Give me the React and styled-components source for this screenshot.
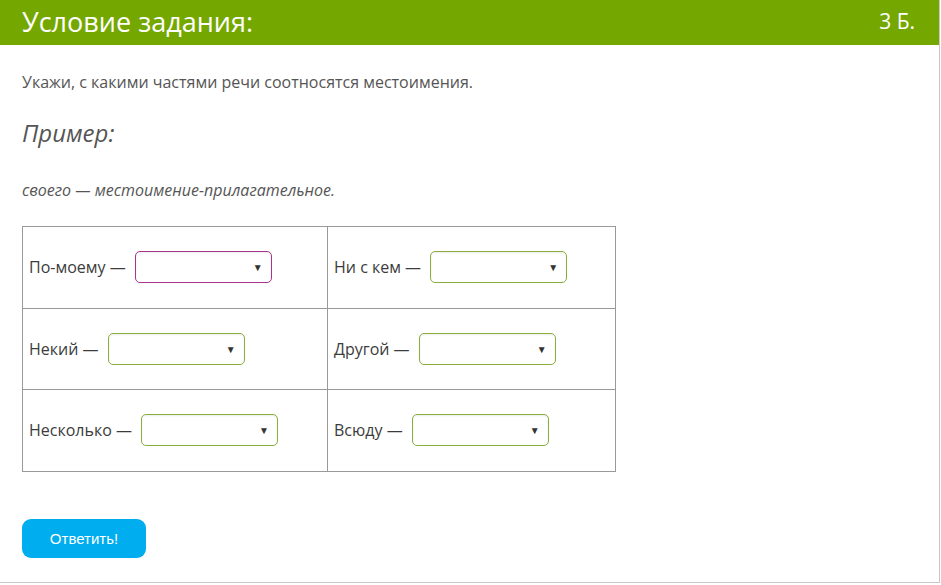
import React from "react";
import styled, { createGlobalStyle } from "styled-components";

const GlobalStyle = createGlobalStyle`
  html, body {
    margin: 0;
    padding: 0;
    background: #fff;
  }
  body {
    font-family: "Open Sans", "Noto Sans", sans-serif;
    color: #444;
  }
`;

const Card = styled.div`
  width: 939px;
  height: 582px;
  border-right: 1px solid #c8c8c8;
  border-bottom: 1px solid #c8c8c8;
  box-sizing: content-box;
  display: flex;
  flex-direction: column;
`;

const Header = styled.div`
  height: 45px;
  background: #74a800;
  color: #fff;
  display: flex;
  align-items: center;
  justify-content: space-between;
  padding: 0 24px 0 22px;
`;

const HeaderTitle = styled.h2`
  margin: 0;
  font-size: 27px;
  font-weight: 400;
  line-height: 1;
  padding-bottom: 2px;
`;

const Points = styled.span`
  font-size: 21px;
  line-height: 1;
  padding-bottom: 2px;
`;

const Body = styled.div`
  padding: 0 22px;
  display: flex;
  flex-direction: column;
`;

const Lead = styled.p`
  margin: 26px 0 0;
  font-size: 16px;
  line-height: 22px;
  color: #555;
`;

const ExampleTitle = styled.h3`
  margin: 25px 0 0;
  font-size: 24px;
  font-style: italic;
  font-weight: 400;
  line-height: 30px;
  color: #555;
`;

const ExampleText = styled.p`
  margin: 32px 0 0;
  font-size: 16px;
  font-style: italic;
  line-height: 20px;
  color: #555;
`;

const Table = styled.table`
  margin-top: 26px;
  width: 594px;
  border-collapse: collapse;
  border: 1px solid #999;
  table-layout: fixed;
`;

const Cell = styled.td`
  border: 1px solid #999;
  height: 81.5px;
  padding: 0 6px;
  width: ${(p) => (p.$first ? "305px" : "auto")};
  box-sizing: border-box;
`;

const Field = styled.div`
  display: flex;
  align-items: center;
  gap: 9px;
  font-size: 16px;
  color: #3c3c3c;
`;

const SelectBox = styled.div`
  width: 137px;
  height: 32px;
  box-sizing: border-box;
  border: 1px solid ${(p) => (p.$active ? "#a8358c" : "#8aae3c")};
  border-radius: 5px;
  display: flex;
  align-items: center;
  justify-content: flex-end;
  padding-right: 8px;
  background: #fff;
  box-shadow: inset 0 1px 2px rgba(0, 0, 0, 0.08);
`;

const Arrow = styled.span`
  font-size: 10px;
  color: #333;
  line-height: 1;
`;

const Submit = styled.button`
  margin-top: 47px;
  width: 124px;
  height: 39px;
  border: none;
  border-radius: 9px;
  background: #00adef;
  color: #fff;
  font-family: "Liberation Sans", Arial, sans-serif;
  font-size: 15px;
  cursor: pointer;
  align-self: flex-start;
`;

const rows = [
  ["По-моему", "Ни с кем"],
  ["Некий", "Другой"],
  ["Несколько", "Всюду"],
];

const Select = ({ active }) => (
  <SelectBox $active={active}>
    <Arrow>▼</Arrow>
  </SelectBox>
);

const App = () => (
  <>
    <GlobalStyle />
    <Card>
      <Header>
        <HeaderTitle>Условие задания:</HeaderTitle>
        <Points>3 Б.</Points>
      </Header>
      <Body>
        <Lead>Укажи, с какими частями речи соотносятся местоимения.</Lead>
        <ExampleTitle>Пример:</ExampleTitle>
        <ExampleText>своего — местоимение-прилагательное.</ExampleText>
        <Table>
          <tbody>
            {rows.map((row, i) => (
              <tr key={i}>
                {row.map((word, j) => (
                  <Cell key={word} $first={j === 0}>
                    <Field>
                      {word} —
                      <Select active={i === 0 && j === 0} />
                    </Field>
                  </Cell>
                ))}
              </tr>
            ))}
          </tbody>
        </Table>
        <Submit type="button">Ответить!</Submit>
      </Body>
    </Card>
  </>
);

export default App;
